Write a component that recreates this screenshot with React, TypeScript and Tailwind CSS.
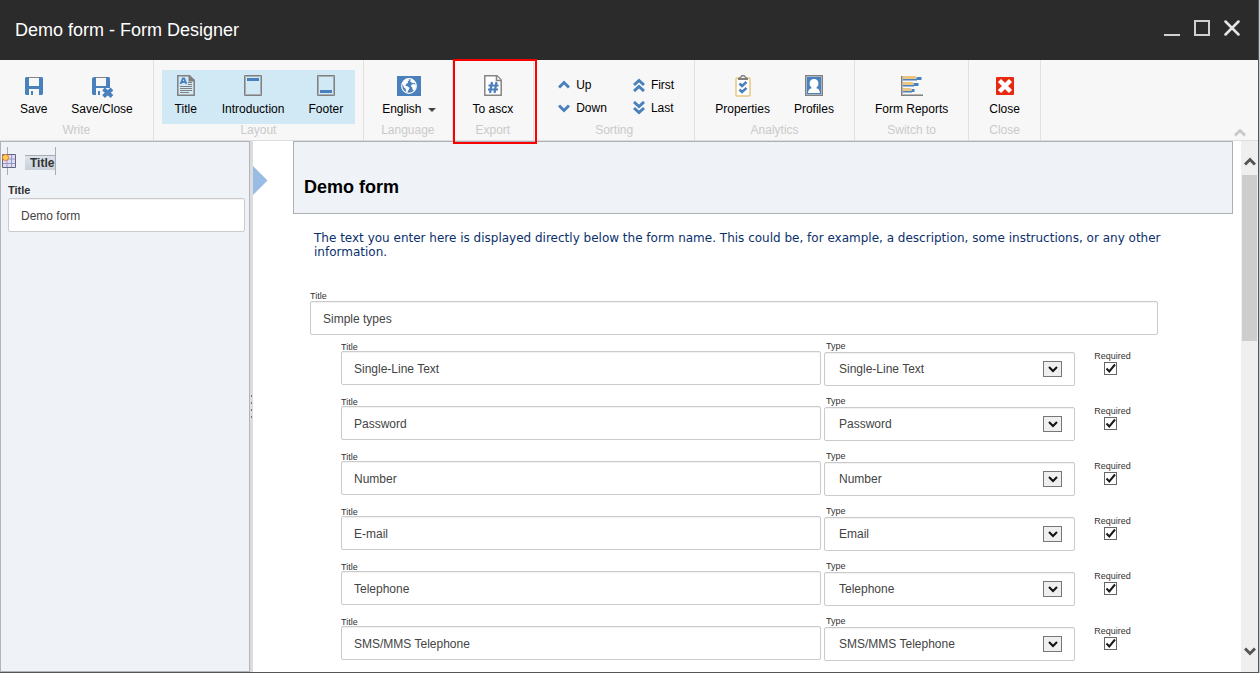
import { useId, type ReactNode } from "react";

const ICON = "size-6 shrink-0";

function SaveIcon() {
  return (
    <svg viewBox="0 0 24 24" className={ICON} aria-hidden="true">
      <path fill="#4a80bc" d="M4 3h3v9h10V3h3l1 1v16l-1 1h-3v-6H7v6H4l-1-1V4z" />
      <path fill="#4a80bc" d="M9 17h2v4H9z" />
      <path fill="#858585" d="M7 3h10v1H7z" />
    </svg>
  );
}

function SaveCloseIcon() {
  return (
    <svg viewBox="0 0 24 24" className={ICON} aria-hidden="true">
      <path fill="#4a80bc" d="M4 3h2v9h10V3h3l1 1v10H6v7H3l-1-1V4z" />
      <path fill="#4a80bc" d="M8 17h2v4H8z" />
      <path fill="#858585" d="M6 3h10v1H6z" />
      <path stroke="#4a80bc" strokeWidth="4" d="m13.500 15 8.500 7.500M22 15l-8.500 7.500" />
    </svg>
  );
}

function TitleIcon() {
  return (
    <svg viewBox="0 0 24 24" className={ICON} fill="none" aria-hidden="true">
      <path stroke="#808080" strokeWidth="1.500" d="M3.800 1.800h11.700L20.200 6.500v14.700H3.800z" />
      <path fill="#808080" d="M14.500 1v6.500H21V6z" />
      <path stroke="#4a80bc" strokeWidth="1.800" d="m6.500 10 2.400-5.500h1.200L12.500 10M7.500 8h4.200" />
      <path stroke="#808080" d="M14 8.500h4M14 10.500h4M6 12.500h12M6 14.500h12M6 16.500h12M6 18.500h9" />
    </svg>
  );
}

function PageBandIcon({ bottom = false }: { bottom?: boolean }) {
  return (
    <svg viewBox="0 0 24 24" className={ICON} fill="none" aria-hidden="true">
      <path stroke="#a3aeb3" d="M4.500 2.500h15v18h-15z" />
      <path stroke="#808080" d="M3.500 1.500h17v20h-17z" />
      <path fill="#4a80bc" d={bottom ? "M6 16h12v3H6z" : "M6 4h12v3H6z"} />
    </svg>
  );
}

function GlobeIcon() {
  return (
    <svg viewBox="0 0 24 24" className={ICON} aria-hidden="true">
      <path fill="#4a80bc" d="M0 2h24v20H0z" />
      <circle cx="12" cy="12" r="7.3" fill="none" stroke="#fff" strokeWidth="1.2" />
      <path fill="#fff" d="M5 9.500C6 6.500 8.500 5 11 4.800l1.300 1.400-1.600 1.300.4 1.200-2 1.300-.7 1.700 2.600.8 1.600 1.600-1.100 2-1.100 2.300-1.300-.6-.3-2.700L7 13.500l-.7-2zM14 5l2.600 1.200 1.900 2.400-2.200.7-1.800-.7-1.300-1zM14.600 10.500l2.600-.5 2 1.600-.7 3-1.700 2.200-1.300-1.200-.2-2-1.300-1.100z" />
    </svg>
  );
}

function AscxIcon() {
  return (
    <svg viewBox="0 0 24 24" className={ICON} fill="none" aria-hidden="true">
      <path fill="#fff" stroke="#858585" strokeWidth="1.500" d="M3.800 1.800H16l4.200 4.200v15.200H3.800z" />
      <path fill="#fff" stroke="#858585" strokeWidth="1.500" d="M15.500 2v4.500H20" />
      <path stroke="#4a80bc" strokeWidth="2.200" d="m11 8-2 11M15.500 8l-2 11M7.500 11.500h10M7 15.500h10" />
    </svg>
  );
}

function PropertiesIcon() {
  return (
    <svg viewBox="0 0 24 24" className={ICON} fill="none" aria-hidden="true">
      <rect x="5" y="4" width="14" height="18" rx="1" fill="#fff" stroke="#ecc67f" strokeWidth="1.500" />
      <path fill="#808080" d="M7 6V4l2-1 1.500-2h3L15 3l2 1v2z" />
      <path fill="#f7f7f7" d="m10 4 1-1.500h2L14 4z" />
      <path stroke="#4a80bc" strokeWidth="2.500" d="m8.500 9.500 2.500 2.500 4.500-4M8.500 15.500l2.500 2.500 4.500-4" />
    </svg>
  );
}

function ProfilesIcon() {
  return (
    <svg viewBox="0 0 24 24" className={ICON} aria-hidden="true">
      <path fill="#808080" d="M3 1h18v21H3z" />
      <path fill="#a9b4c0" d="M4 2h16v19H4z" />
      <path fill="#4a80bc" d="M5 3h14v17H5z" />
      <path fill="#fff" d="M12 5c2.800 0 4.500 2 4.500 4.500S14.800 14 12 14s-4.500-2-4.500-4.500S9.200 5 12 5zM8.500 14.500h7c1.500.8 2.300 2.300 2.500 4.500H6c.2-2.200 1-3.700 2.500-4.500z" />
      <path fill="#fff" d="M9.500 13h5v3h-5z" />
    </svg>
  );
}

function ReportsIcon() {
  return (
    <svg viewBox="0 0 24 24" className={ICON} aria-hidden="true">
      <path fill="#9dbbdc" d="M16 3h6v3h-6zM13 9h6v3h-6zM11 15h4v3h-4zM3 5h14v2H3zM3 11h11v2H3zM3 17h9v2H3z" />
      <path fill="#4a80bc" d="M17 3h4v3H3V5h14zM14 9h4v3H3v-1h11zM12 15h2v3H3v-1h9z" />
      <path fill="#ecc67f" d="M3 2h13v3H3zM3 8h10v3H3zM3 14h8v3H3z" />
      <path fill="#808080" d="M1 2h1v19h21v1H1z" />
      <path fill="#b5b5b5" d="M2 2h1v18h20v1H2z" />
    </svg>
  );
}

function CloseIcon() {
  return (
    <svg viewBox="0 0 24 24" className={ICON} aria-hidden="true">
      <rect x="3" y="3" width="18" height="18" rx="1" fill="#e8280f" />
      <path stroke="#fff" strokeWidth="4.500" d="m6.500 6.500 11 11M17.500 6.500l-11 11" />
    </svg>
  );
}

function SortIcon({ down = false, double = false }: { down?: boolean; double?: boolean }) {
  const up = double ? "M1 7 6 2.500 11 7M1 13l5-4.500 5 4.500" : "m1 9.500 5-5 5 5";
  const dn = double ? "m1 1 5 4.500L11 1M1 7l5 4.500L11 7" : "m1 4.500 5 5 5-5";
  return (
    <svg viewBox="0 0 12 14" className="h-3.5 w-3" fill="none" stroke="#4a80bc" strokeWidth="3" aria-hidden="true">
      <path d={down ? dn : up} />
    </svg>
  );
}

function Group({ label, children, marked = false }: { label: string; children: ReactNode; marked?: boolean }) {
  return (
    <section aria-label={label} className="relative flex flex-col border-r border-[#e1e1e1] px-2 pt-2.5">
      <div className="flex h-[54px]">{children}</div>
      <div className="text-center leading-3 text-[#cacaca]">{label}</div>
      {marked && <div className="pointer-events-none absolute -top-px -right-1 -bottom-1 left-0 z-10 border-2 border-[#fb0000]" />}
    </section>
  );
}

function RibbonButton({ icon, label, active = false }: { icon: ReactNode; label: string; active?: boolean }) {
  return (
    <button type="button" className={`flex flex-col items-center px-3 pt-1 whitespace-nowrap ${active ? "bg-[#d0e9f5]" : ""}`}>
      {icon}
      <span className="mt-[3px] leading-4">{label}</span>
    </button>
  );
}

function SortButton({ label, down, double }: { label: string; down?: boolean; double?: boolean }) {
  return (
    <button type="button" className="flex h-[23px] items-center gap-1.5">
      <SortIcon down={down} double={double} />
      {label}
    </button>
  );
}

const CONTROL = "block h-[34px] w-full rounded-xs border border-[#cbcbcb] bg-white text-xs text-[#444] shadow-[inset_0_1px_1px_rgba(0,0,0,0.06)] outline-none";

function TextField({ id, value }: { id: string; value: string }) {
  return <input id={id} defaultValue={value} className={`${CONTROL} px-3 pt-0.5`} />;
}

function FieldRow({ title, type }: { title: string; type: string }) {
  const id = useId();
  return (
    <div className="flex h-[55px] items-start">
      <div className="min-w-0 flex-1">
        <label htmlFor={`${id}-title`} className="block h-2.5 text-[9px] leading-3">Title</label>
        <TextField id={`${id}-title`} value={title} />
      </div>
      <div className="ml-[3px] w-[251px]">
        <label htmlFor={`${id}-type`} className="block h-[11px] pl-0.5 text-[9px] leading-[11px]">Type</label>
        <div className="relative">
          <select id={`${id}-type`} defaultValue={type} className={`${CONTROL} appearance-none pl-3.5`}>
            <option>{type}</option>
          </select>
          <span className="pointer-events-none absolute top-[9px] right-[13px] flex h-4 w-[19px] items-center justify-center border border-[#777] bg-[#efefef]">
            <svg viewBox="0 0 10 7" className="h-[7px] w-2.5" fill="none" stroke="#111" strokeWidth="2" aria-hidden="true">
              <path d="m1 1 4 4 4-4" />
            </svg>
          </span>
        </div>
      </div>
      <div className="ml-[19px] flex w-[37px] flex-col items-center pt-2.5">
        <label htmlFor={`${id}-req`} className="text-[9px] leading-[10px]">Required</label>
        <span className="relative mt-px mr-1 block size-[13px]">
          <input id={`${id}-req`} type="checkbox" defaultChecked className="peer block size-[13px] appearance-none border border-[#666] bg-white" />
          <svg viewBox="0 0 13 13" className="pointer-events-none absolute inset-0 hidden size-[13px] peer-checked:block" aria-hidden="true">
            <path fill="none" stroke="#1a1a1a" strokeWidth="2" d="M2.500 6.500 5.300 9.500 11 2.500" />
          </svg>
        </span>
      </div>
    </div>
  );
}

const FIELDS = [
  { title: "Single-Line Text", type: "Single-Line Text" },
  { title: "Password", type: "Password" },
  { title: "Number", type: "Number" },
  { title: "E-mail", type: "Email" },
  { title: "Telephone", type: "Telephone" },
  { title: "SMS/MMS Telephone", type: "SMS/MMS Telephone" },
];

export default function App() {
  return (
    <div className="flex min-h-screen bg-[#c3ccd2] pr-px font-['Liberation_Sans',Arial,sans-serif] text-xs text-[#333]">
      <div className="flex min-w-0 flex-1 flex-col border-r border-b border-[#555] bg-white">
        <header className="flex h-[60px] items-center justify-between bg-[#2b2b2b] pr-[18px] pl-[15px] text-white">
          <h1 className="text-lg leading-6">Demo form - Form Designer</h1>
          <div className="flex gap-3.5 pb-1">
            <button type="button" aria-label="Minimize" className="flex size-4 items-end">
              <span className="block h-0.5 w-full bg-[#d0d0d0]" />
            </button>
            <button type="button" aria-label="Maximize" className="size-4 border-2 border-[#d0d0d0]" />
            <button type="button" aria-label="Close window" className="size-4">
              <svg viewBox="0 0 16 16" className="size-4" stroke="#e6e6e6" strokeWidth="2.500" strokeLinecap="round" aria-hidden="true">
                <path d="m1.500 1.500 13 13M14.500 1.500l-13 13" />
              </svg>
            </button>
          </div>
        </header>

        <nav aria-label="Ribbon" className="flex h-[81px] border-b border-[#dedede] bg-[#f7f7f7] text-black">
          <Group label="Write">
            <RibbonButton icon={<SaveIcon />} label="Save" />
            <RibbonButton icon={<SaveCloseIcon />} label="Save/Close" />
          </Group>
          <Group label="Layout">
            <RibbonButton icon={<TitleIcon />} label="Title" active />
            <RibbonButton icon={<PageBandIcon />} label="Introduction" active />
            <RibbonButton icon={<PageBandIcon bottom />} label="Footer" active />
          </Group>
          <Group label="Language">
            <button type="button" className="flex flex-col items-center pt-1 pr-2 pl-2.5">
              <GlobeIcon />
              <span className="mt-[3px] flex items-center gap-1.5 leading-4">
                English
                <svg viewBox="0 0 8 4" className="mt-0.5 h-1 w-2" fill="#444" aria-hidden="true">
                  <path d="M0 0h8L4 4z" />
                </svg>
              </span>
            </button>
          </Group>
          <Group label="Export" marked>
            <RibbonButton icon={<AscxIcon />} label="To ascx" />
          </Group>
          <Group label="Sorting">
            <div className="grid grid-cols-[auto_auto] content-start gap-x-[26px] pt-[3px] pr-3 pl-4">
              <SortButton label="Up" />
              <SortButton label="First" double />
              <SortButton label="Down" down />
              <SortButton label="Last" down double />
            </div>
          </Group>
          <Group label="Analytics">
            <RibbonButton icon={<PropertiesIcon />} label="Properties" />
            <RibbonButton icon={<ProfilesIcon />} label="Profiles" />
          </Group>
          <Group label="Switch to">
            <RibbonButton icon={<ReportsIcon />} label="Form Reports" />
          </Group>
          <Group label="Close">
            <RibbonButton icon={<CloseIcon />} label="Close" />
          </Group>
          <button type="button" aria-label="Collapse ribbon" className="mr-3 mb-[3px] ml-auto self-end">
            <svg viewBox="0 0 12 9" className="h-[9px] w-3" fill="none" stroke="#c9c9c9" strokeWidth="3" aria-hidden="true">
              <path d="m1 7.500 5-5 5 5" />
            </svg>
          </button>
        </nav>

        <div className="flex flex-1">
          <aside className="w-[250px] shrink-0 border border-[#b1b5b9] bg-[#eff3f8]">
            <div className="flex h-[39px] items-start pt-[5px]">
              <div className="relative h-7 w-[7px] border-r border-[#a9adb1]">
                <svg viewBox="0 0 14 14" className="absolute top-[7px] left-px size-3.5" aria-hidden="true">
                  <path fill="#dcdcf8" stroke="#66667f" d="M.5.500h13v13H.5z" />
                  <path stroke="#9a9abd" d="M5 1v12M9.500 1v12M1 5h12M1 9.500h12" />
                  <circle cx="3.500" cy="3.500" r="3" fill="#ffd84a" stroke="#f0703c" />
                </svg>
              </div>
              <button type="button" className="mt-2 ml-[17px] h-[15px] w-[30px] overflow-hidden border-t border-[#a9adb1] bg-linear-to-b from-[#dde3ec] to-[#c9d0db] pl-[5px] text-left text-xs leading-[15px] font-bold">
                Title
              </button>
              <div className="h-7 w-px bg-[#a9adb1]" />
            </div>
            <div className="pr-1 pl-[7px]">
              <label htmlFor="form-title" className="block h-[17px] text-[11px] leading-[19px] font-bold">Title</label>
              <TextField id="form-title" value="Demo form" />
            </div>
          </aside>
          <div role="separator" className="flex w-[3px] shrink-0 flex-col items-center justify-center gap-[5px] bg-[#dcdcdc]">
            <span className="h-0.5 w-px bg-[#65789a]" />
            <span className="h-0.5 w-px bg-[#65789a]" />
            <span className="h-0.5 w-px bg-[#65789a]" />
            <span className="h-0.5 w-px bg-[#65789a]" />
          </div>

          <main className="flex min-w-0 flex-1 pr-2">
            <button type="button" aria-label="Selected section" className="mt-[25px] h-[29px] w-10 shrink-0">
              <svg viewBox="0 0 15 29" className="h-[29px] w-[15px]" fill="#98bce4" aria-hidden="true">
                <path d="M0 0v29l14.500-14.500z" />
              </svg>
            </button>
            <div className="min-w-0 flex-1">
              <div className="flex h-[73px] items-center border border-[#abb0b5] bg-[#eff3f8] pt-[18px] pl-2.5">
                <h2 className="text-lg leading-5 font-bold text-black">Demo form</h2>
              </div>
              <p className="mt-[17px] pr-12 pl-[21px] font-['DejaVu_Sans',Verdana,sans-serif] text-xs leading-[14px] text-[#0a2f6c]">
                The text you enter here is displayed directly below the form name. This could be, for example, a description, some instructions, or any other information.
              </p>
              <div className="mt-[31px] pl-[17px]">
                <div className="pr-[75px]">
                  <label htmlFor="section-title" className="block h-[11px] text-[9px] leading-3">Title</label>
                  <TextField id="section-title" value="Simple types" />
                </div>
                <div className="mt-1.5 pr-[102px] pl-[31px]">
                  {FIELDS.map((f) => (
                    <FieldRow key={f.title} title={f.title} type={f.type} />
                  ))}
                </div>
              </div>
            </div>
          </main>

          <div className="flex w-[17px] shrink-0 flex-col items-center bg-[#efefef]">
            <button type="button" aria-label="Scroll up" className="flex h-[34px] items-end pb-[9px]">
              <svg viewBox="0 0 12 9" className="h-[9px] w-3" fill="none" stroke="#555" strokeWidth="3" aria-hidden="true">
                <path d="m1 7.500 5-5 5 5" />
              </svg>
            </button>
            <div className="h-[166px] w-[15px] bg-[#cdcdcd]" />
            <button type="button" aria-label="Scroll down" className="mt-auto flex h-[34px] items-end pb-4">
              <svg viewBox="0 0 12 9" className="h-[9px] w-3" fill="none" stroke="#555" strokeWidth="3" aria-hidden="true">
                <path d="m1 1.500 5 5 5-5" />
              </svg>
            </button>
          </div>
        </div>
      </div>
    </div>
  );
}
